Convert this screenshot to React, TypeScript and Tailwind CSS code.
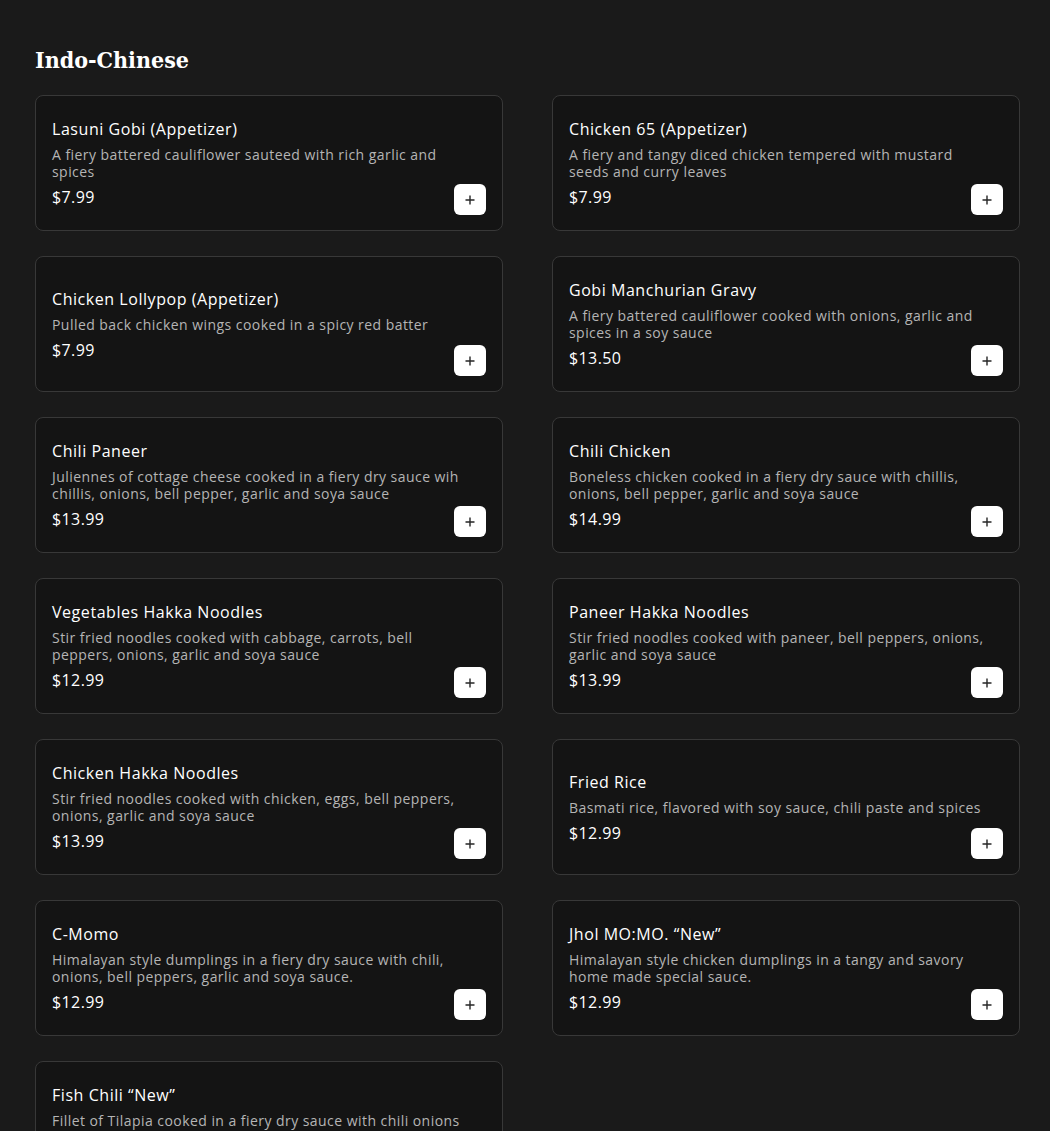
import React from "react";

type Item = { name: string; desc: string; price: string };

const items: Item[] = [
  { name: "Lasuni Gobi (Appetizer)", desc: "A fiery battered cauliflower sauteed with rich garlic and spices", price: "$7.99" },
  { name: "Chicken 65 (Appetizer)", desc: "A fiery and tangy diced chicken tempered with mustard seeds and curry leaves", price: "$7.99" },
  { name: "Chicken Lollypop (Appetizer)", desc: "Pulled back chicken wings cooked in a spicy red batter", price: "$7.99" },
  { name: "Gobi Manchurian Gravy", desc: "A fiery battered cauliflower cooked with onions, garlic and spices in a soy sauce", price: "$13.50" },
  { name: "Chili Paneer", desc: "Juliennes of cottage cheese cooked in a fiery dry sauce wih chillis, onions, bell pepper, garlic and soya sauce", price: "$13.99" },
  { name: "Chili Chicken", desc: "Boneless chicken cooked in a fiery dry sauce with chillis, onions, bell pepper, garlic and soya sauce", price: "$14.99" },
  { name: "Vegetables Hakka Noodles", desc: "Stir fried noodles cooked with cabbage, carrots, bell peppers, onions, garlic and soya sauce", price: "$12.99" },
  { name: "Paneer Hakka Noodles", desc: "Stir fried noodles cooked with paneer, bell peppers, onions, garlic and soya sauce", price: "$13.99" },
  { name: "Chicken Hakka Noodles", desc: "Stir fried noodles cooked with chicken, eggs, bell peppers, onions, garlic and soya sauce", price: "$13.99" },
  { name: "Fried Rice", desc: "Basmati rice, flavored with soy sauce, chili paste and spices", price: "$12.99" },
  { name: "C-Momo", desc: "Himalayan style dumplings in a fiery dry sauce with chili, onions, bell peppers, garlic and soya sauce.", price: "$12.99" },
  { name: "Jhol MO:MO. \u201CNew\u201D", desc: "Himalayan style chicken dumplings in a tangy and savory home made special sauce.", price: "$12.99" },
  { name: "Fish Chili \u201CNew\u201D", desc: "Fillet of Tilapia cooked in a fiery dry sauce with chili onions bell peppers, garlic and soya sauce.", price: "$14.99" },
];

function PlusIcon() {
  return (
    <svg width="10" height="10" viewBox="0 0 10 10" fill="none">
      <path d="M5 0.5v9M0.5 5h9" stroke="#262626" strokeWidth="1.4" />
    </svg>
  );
}

function Card({ item }: { item: Item }) {
  return (
    <div className="flex h-[136px] rounded-lg border border-[#383838] bg-[#141414] px-4">
      <div className="min-w-0 flex-1 self-center">
        <div className="text-[16px] leading-[20px] font-medium tracking-[0.55px] text-white">{item.name}</div>
        <div className="mt-[7px] text-[14px] leading-[17px] tracking-[0.45px] text-[#b5b5b5]">{item.desc}</div>
        <div className="mt-[7px] text-[16px] leading-[20px] tracking-[0.4px] text-white">{item.price}</div>
      </div>
      <button className="-ml-[18px] mb-[15px] flex h-[31px] w-[32px] shrink-0 items-center justify-center self-end rounded-md bg-white">
        <PlusIcon />
      </button>
    </div>
  );
}

export default function App() {
  return (
    <div
      className="min-h-screen bg-[#1a1a1a] pl-[35px] pr-[30px] pt-[44px] pb-10"
      style={{ fontFamily: '"Open Sans", "Liberation Sans", sans-serif' }}
    >
      <h2
        className="text-[23px] leading-[32px] font-black text-white"
        style={{ fontFamily: '"DejaVu Serif Condensed", "DejaVu Serif", serif', fontStretch: "condensed" }}
      >
        Indo-Chinese
      </h2>
      <div className="mt-[19px] grid grid-cols-2 gap-x-[49px] gap-y-[25px]">
        {items.map((it) => (
          <Card key={it.name} item={it} />
        ))}
      </div>
    </div>
  );
}
